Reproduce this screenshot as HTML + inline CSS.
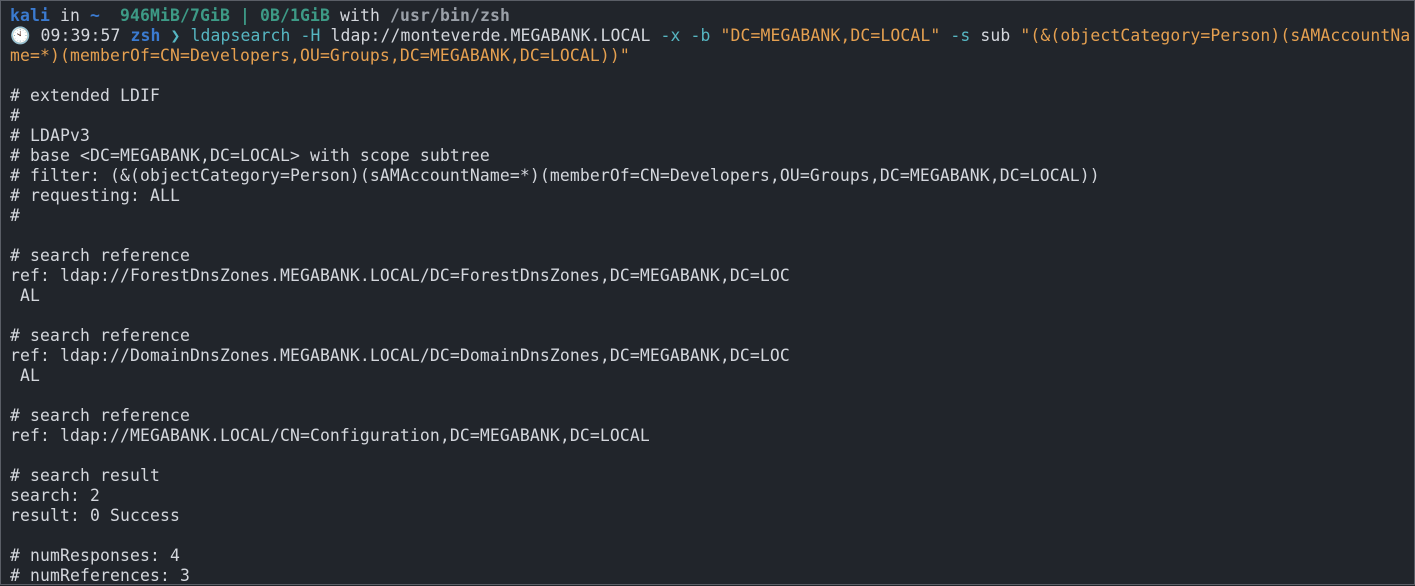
<!DOCTYPE html>
<html><head><meta charset="utf-8"><style>
html,body{margin:0;padding:0}
body{width:1415px;height:585px;background:#21252b;overflow:hidden;box-sizing:border-box;border:1px solid #5a5e66;}
pre{margin:0;padding:5px 0 0 9px;font-family:"DejaVu Sans Mono","Liberation Mono",monospace;font-size:16.4px;letter-spacing:0.13px;line-height:20px;color:#d4d7dd;white-space:pre}
.b{color:#3b7bd0;font-weight:bold}.g{color:#3d9a86;font-weight:bold}.gr{color:#9aa0a8;font-weight:bold}
.c{color:#56b6c2}.o{color:#e5a050}.w{color:#e8e8e8}
</style></head><body><pre><span class="b">kali</span> in <span class="b">~</span>  <span class="g">946MiB/7GiB | 0B/1GiB</span> with <span class="gr">/usr/bin/zsh</span>
🕙 09:39:57 <span class="b">zsh</span> <span class="c">❯ ldapsearch</span> <span class="c">-H</span> ldap://monteverde.MEGABANK.LOCAL <span class="c">-x</span> <span class="c">-b</span> <span class="o">"DC=MEGABANK,DC=LOCAL"</span> <span class="c">-s</span> sub <span class="o">"(&amp;(objectCategory=Person)(sAMAccountNa</span>
<span class="o">me=*)(memberOf=CN=Developers,OU=Groups,DC=MEGABANK,DC=LOCAL))"</span>

# extended LDIF
#
# LDAPv3
# base &lt;DC=MEGABANK,DC=LOCAL&gt; with scope subtree
# filter: (&amp;(objectCategory=Person)(sAMAccountName=*)(memberOf=CN=Developers,OU=Groups,DC=MEGABANK,DC=LOCAL))
# requesting: ALL
#

# search reference
ref: ldap://ForestDnsZones.MEGABANK.LOCAL/DC=ForestDnsZones,DC=MEGABANK,DC=LOC
 AL

# search reference
ref: ldap://DomainDnsZones.MEGABANK.LOCAL/DC=DomainDnsZones,DC=MEGABANK,DC=LOC
 AL

# search reference
ref: ldap://MEGABANK.LOCAL/CN=Configuration,DC=MEGABANK,DC=LOCAL

# search result
search: 2
result: 0 Success

# numResponses: 4
# numReferences: 3
</pre></body></html>
